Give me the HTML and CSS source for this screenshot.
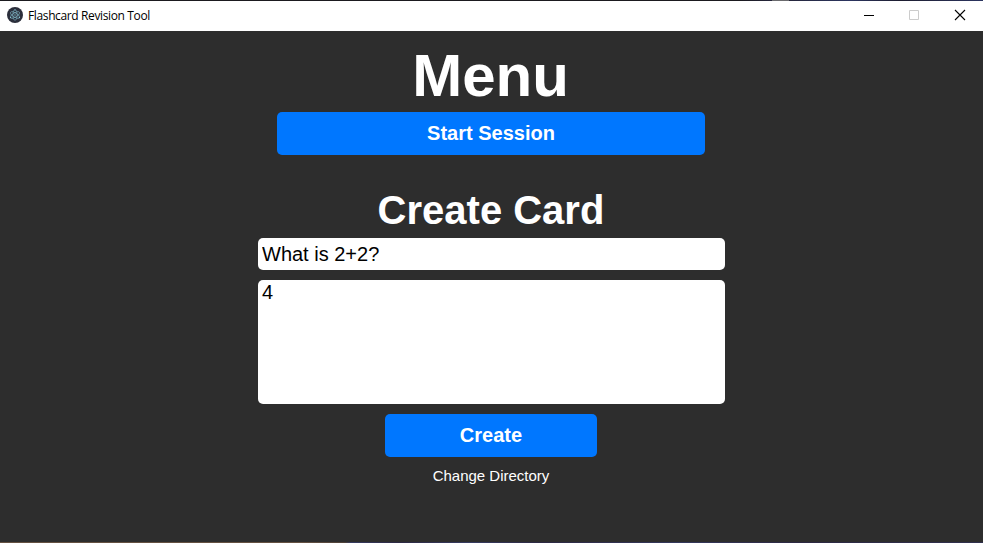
FILE: index.html
```html
<!DOCTYPE html>
<html lang="en">
<head>
<meta charset="utf-8">
<title>Flashcard Revision Tool</title>
<link rel="stylesheet" href="styles.css">
</head>
<body>
<div class="desktop-top"></div>
<header class="titlebar">
  <svg class="app-icon" width="16" height="16" viewBox="0 0 16 16">
    <circle cx="8" cy="8" r="8" fill="#2b2e3b"/>
    <g fill="none" stroke="#9feaf9" stroke-opacity=".6" stroke-width=".7">
      <ellipse cx="8" cy="8" rx="5.2" ry="2.1" transform="rotate(30 8 8)"/>
      <ellipse cx="8" cy="8" rx="5.2" ry="2.1" transform="rotate(90 8 8)"/>
      <ellipse cx="8" cy="8" rx="5.2" ry="2.1" transform="rotate(150 8 8)"/>
    </g>
    <g fill="#9feaf9" fill-opacity=".75">
      <circle cx="8" cy="8" r=".7"/>
      <circle cx="3.6" cy="10.6" r=".7"/>
      <circle cx="12.4" cy="10.6" r=".7"/>
      <circle cx="8" cy="2.8" r=".6"/>
    </g>
  </svg>
  <span class="app-title">Flashcard Revision Tool</span>
  <div class="window-controls">
    <svg width="46" height="30" viewBox="0 0 46 30"><path d="M18 14.5h10" stroke="#000"/></svg>
    <svg width="45" height="30" viewBox="0 0 45 30"><path d="M17.5 9.5h9v9h-9z" fill="none" stroke="#ccc"/></svg>
    <svg width="46" height="30" viewBox="0 0 46 30"><path d="M18 9l10 10M28 9L18 19" stroke="#000" stroke-width="1.1"/></svg>
  </div>
</header>
<main class="content">
  <h1 class="menu-title">Menu</h1>
  <button class="button start">Start Session</button>
  <h2 class="create-title">Create Card</h2>
  <input class="field question" type="text" value="What is 2+2?">
  <textarea class="field answer">4</textarea>
  <button class="button create">Create</button>
  <a class="directory">Change Directory</a>
</main>
<div class="desktop-bottom"></div>
</body>
</html>
```
FILE: styles.css
```css
* {
  box-sizing: border-box;
}

body {
  margin: 0;
  height: 543px;
  display: flex;
  flex-direction: column;
  overflow: hidden;
  background: #2d2d2d;
  font-family: "Liberation Sans", Arial, sans-serif;
  color: #fff;
}

.desktop-top {
  height: 1px;
  background: linear-gradient(90deg, #1b1a1f 0 740px, #25263c 772px, #6b6b6e 772px 789px, #25263c 789px, #2c3560 850px, #1d1d30 900px, #2c3560);
}

.desktop-bottom {
  height: 1px;
  background: linear-gradient(90deg, #655142 0 300px, #4e4038 345px, #363b61 350px, #2c2842 400px, #363b61 470px, #2c2842 540px, #34385c 680px, #2c2842 800px, #30304e);
}

.titlebar {
  height: 30px;
  display: flex;
  align-items: center;
  padding-left: 7px;
  background: #fff;
  color: #000;
}

.app-icon {
  margin-top: -2px;
}

.app-title {
  margin-left: 5px;
  font: 12px/16px "Open Sans", sans-serif;
  letter-spacing: -0.37px;
}

.window-controls {
  display: flex;
  margin-left: auto;
}

.content {
  flex: 1;
  display: flex;
  flex-direction: column;
  align-items: center;
  padding-top: 8px;
}

.menu-title {
  margin: 0 2px 0 0;
  font-size: 60px;
  line-height: 73px;
}

.button {
  height: 43px;
  padding: 0;
  border: 0;
  border-radius: 5px;
  background: #07f;
  color: #fff;
  font: bold 20px/43px "Liberation Sans", Arial, sans-serif;
}

.start {
  width: 428px;
  margin-right: 1px;
}

.create-title {
  margin: 32px 1px 5px 0;
  font-size: 40px;
  line-height: 46px;
}

.field {
  width: 467px;
  padding: 0 4px;
  border: 0;
  border-radius: 5px;
  background: #fff;
  color: #000;
  font: 20px/23px "Liberation Sans", Arial, sans-serif;
  outline: 0;
}

.question {
  height: 32px;
}

.answer {
  height: 124px;
  margin: 10px 0;
  padding-top: 1px;
  resize: none;
}

.create {
  width: 212px;
  margin-right: 1px;
}

.directory {
  margin: 10px 1px 0 0;
  font-size: 15px;
  line-height: 18px;
}
```
